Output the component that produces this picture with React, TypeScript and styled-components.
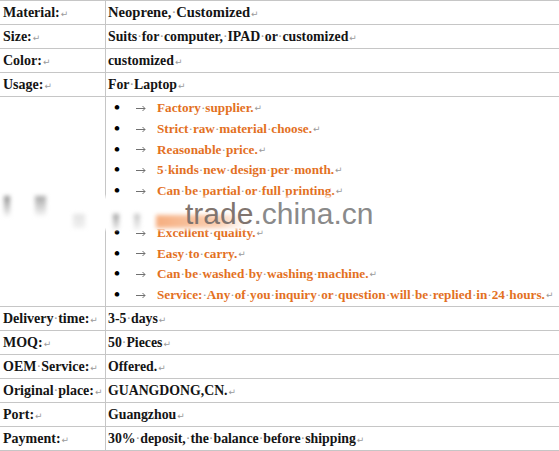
import React from 'react';
import styled, { createGlobalStyle } from 'styled-components';

const GlobalStyle = createGlobalStyle`
  html, body {
    margin: 0;
    padding: 0;
    background: #fff;
    overflow: hidden;
  }
`;

const LINE = '#c6c6c6';
const ORANGE = '#e3711f';

const Page = styled.div`
  position: relative;
  width: 559px;
  height: 451px;
  overflow: hidden;
  font-family: 'Liberation Serif', 'Times New Roman', serif;
  font-weight: bold;
  font-size: 14px;
  color: #141414;
`;

const Sheet = styled.div`
  border-top: 1px solid ${LINE};
`;

const Row = styled.div<{ $height?: number }>`
  display: grid;
  grid-template-columns: 106px 1fr;
  height: ${(p) => p.$height ?? 23}px;
  border-bottom: 1px solid ${LINE};
`;

const Label = styled.div`
  border-right: 1px solid ${LINE};
  padding-left: 3px;
  line-height: 23px;
  white-space: nowrap;
`;

const Value = styled.div<{ $size?: number }>`
  padding-left: 2px;
  line-height: 23px;
  white-space: nowrap;
  font-size: ${(p) => p.$size ?? 13.8}px;
`;

const List = styled.ul`
  list-style: none;
  margin: 0;
  padding: 1px 0 0 6px;
`;

const Item = styled.li`
  display: flex;
  align-items: center;
  height: 20.8px;
  line-height: 20.8px;
  white-space: nowrap;
  color: ${ORANGE};
  font-size: 13.2px;
`;

const Bullet = styled.span`
  width: 18px;
  color: #000;
  font-size: 17px;
`;

const ArrowBox = styled.span`
  display: flex;
  align-items: center;
  width: 25px;
  padding-left: 4px;
  box-sizing: border-box;
`;

const Dot = styled.span`
  color: #9a9a9a;
  font-weight: normal;
`;

const Return = styled.span`
  font-family: 'DejaVu Sans', sans-serif;
  font-weight: normal;
  font-size: 9px;
  color: #9a9a9a;
  margin-left: 1px;
`;

// watermark band laid over the list cell
const Watermark = styled.div`
  position: absolute;
  left: 0;
  top: 194px;
  width: 559px;
  height: 38px;
  background: linear-gradient(
    to bottom,
    rgba(255, 255, 255, 0) 0%,
    #fff 14%,
    #fff 88%,
    rgba(255, 255, 255, 0) 100%
  );
  pointer-events: none;
`;

const Smudge = styled.div<{ $x: number; $y: number; $w: number; $h: number; $c: string }>`
  position: absolute;
  left: ${(p) => p.$x}px;
  top: ${(p) => p.$y}px;
  width: ${(p) => p.$w}px;
  height: ${(p) => p.$h}px;
  background: ${(p) => p.$c};
  filter: blur(2px);
`;

const Mark = styled.div`
  position: absolute;
  left: 185px;
  top: 2px;
  font-family: 'Liberation Sans', Arial, sans-serif;
  font-weight: normal;
  font-size: 30px;
  line-height: 36px;
  color: #8a8a8a;
`;

const Dim = styled.span`
  color: #80746e;
`;

const Arrow = () => (
  <ArrowBox>
    <svg width="10" height="7" viewBox="0 0 10 7">
      <path d="M0 3.5H9M6.5 1L9 3.5L6.5 6" fill="none" stroke="#707070" strokeWidth="1" />
    </svg>
  </ArrowBox>
);

function marks(text: string) {
  const parts = text.split(' ');
  return parts.map((part, i) => (
    <React.Fragment key={i}>
      {i > 0 && <Dot>·</Dot>}
      {part}
    </React.Fragment>
  ));
}

const topRows: [string, string, number?][] = [
  ['Material:', 'Neoprene, Customized', 14.6],
  ['Size:', 'Suits for computer, IPAD or customized'],
  ['Color:', 'customized'],
  ['Usage:', 'For Laptop'],
];

const bottomRows: [string, string][] = [
  ['Delivery time:', '3-5 days'],
  ['MOQ:', '50 Pieces'],
  ['OEM Service:', 'Offered.'],
  ['Original place:', 'GUANGDONG,CN.'],
  ['Port:', 'Guangzhou'],
  ['Payment:', '30% deposit, the balance before shipping'],
];

// the empty slot is the line hidden under the watermark band
const features = [
  'Factory supplier.',
  'Strict raw material choose.',
  'Reasonable price.',
  '5 kinds new design per month.',
  'Can be partial or full printing.',
  '',
  'Excellent quality.',
  'Easy to carry.',
  'Can be washed by washing machine.',
  'Service: Any of you inquiry or question will be replied in 24 hours.',
];

const SpecRow = ({ label, value, size }: { label: string; value: string; size?: number }) => (
  <Row>
    <Label>
      {marks(label)}
      <Return>↵</Return>
    </Label>
    <Value $size={size}>
      {marks(value)}
      <Return>↵</Return>
    </Value>
  </Row>
);

const App = () => {
  return (
    <Page>
      <GlobalStyle />
      <Sheet>
        {topRows.map(([label, value, size]) => (
          <SpecRow key={label} label={label} value={value} size={size} />
        ))}
        <Row $height={209}>
          <Label />
          <Value>
            <List>
              {features.map((f, i) =>
                f ? (
                  <Item key={i}>
                    <Bullet>•</Bullet>
                    <Arrow />
                    {marks(f)}
                    <Return>↵</Return>
                  </Item>
                ) : (
                  <Item key={i} />
                )
              )}
            </List>
          </Value>
        </Row>
        {bottomRows.map(([label, value]) => (
          <SpecRow key={label} label={label} value={value} />
        ))}
      </Sheet>

      <Watermark>
        <Smudge $x={4} $y={2} $w={6} $h={20} $c="linear-gradient(#8a8a8a, rgba(220,220,220,0.3))" />
        <Smudge $x={35} $y={2} $w={11} $h={20} $c="linear-gradient(#a6a6a6, rgba(230,230,230,0.3))" />
        <Smudge $x={73} $y={20} $w={12} $h={14} $c="linear-gradient(#e4e4e4, #f0f0f0)" />
        <Smudge $x={113} $y={20} $w={6} $h={16} $c="linear-gradient(#9c9c9c, rgba(220,220,220,0.4))" />
        <Smudge $x={134} $y={20} $w={6} $h={16} $c="linear-gradient(#c2c2c2, rgba(230,230,230,0.4))" />
        <Smudge $x={156} $y={21} $w={90} $h={13} $c="linear-gradient(to right, #f6ae80, #f9cfb2 70%, rgba(255,255,255,0))" />
        <Mark>
          <Dim>trade</Dim>.china.cn
        </Mark>
      </Watermark>
    </Page>
  );
};

export default App;
